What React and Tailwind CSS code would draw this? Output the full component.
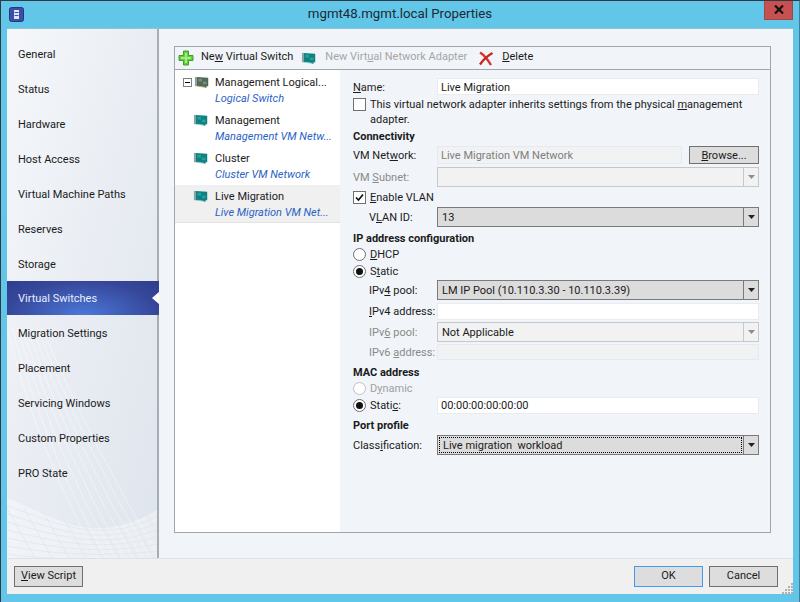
import React from 'react';

const navItems = [
  'General', 'Status', 'Hardware', 'Host Access', 'Virtual Machine Paths', 'Reserves', 'Storage',
  'Virtual Switches', 'Migration Settings', 'Placement', 'Servicing Windows', 'Custom Properties', 'PRO State',
];

const AdapterIcon = ({ tone = 'teal' }) => (
  <svg width="16" height="13" viewBox="0 0 18 14" preserveAspectRatio="none" className="shrink-0">
    <path d="M1 1 L3 1 L3 11 L1 11 Z" fill="#8fa3a8" />
    <path d="M3 1 L16 2 L16 11 L14 11 L14 13 L12 12 L5 11 L3 11 Z" fill={tone === 'teal' ? '#12807f' : '#4d6b58'} />
    <path d="M5 3 L9 3 L9 6 L5 6 Z M10 6 L14 6 L14 9 L10 9 Z" fill={tone === 'teal' ? '#1fa3a0' : '#7d8f78'} />
    <path d="M5 11 L12 12" stroke={tone === 'teal' ? '#7fd0cf' : '#c9a94a'} strokeWidth="1" />
  </svg>
);

const Mesh = () => (
  <svg className="absolute inset-0 w-full h-full pointer-events-none" viewBox="0 0 150 530" preserveAspectRatio="none">
    {[0, 1, 2, 3, 4, 5, 6, 7].map(i => (
      <path key={i} d={`M${i * 5} 300 Q ${30 + i * 8} 420 ${90 + i * 9} 530`} stroke="#ffffff" strokeOpacity="0.55" fill="none" strokeWidth="0.7" />
    ))}
    <path d="M0 470 C 50 490 85 520 150 482 L150 530 L0 530 Z" fill="#ffffff" fillOpacity="0.35" />
    {[0, 1, 2, 3, 4, 5, 6].map(i => (
      <path key={i} d={`M0 ${478 + i * 8} C 40 ${490 + i * 7} 90 ${520 + i * 2} 150 ${488 + i * 7}`} stroke="#dfe6ee" strokeOpacity="0.9" fill="none" strokeWidth="0.8" />
    ))}
    {[0, 1, 2, 3, 4, 5, 6, 7, 8, 9].map(i => (
      <path key={i} d={`M${i * 17} 480 L${i * 17 + 28} 530`} stroke="#dfe6ee" strokeOpacity="0.9" fill="none" strokeWidth="0.8" />
    ))}
  </svg>
);

const U = ({ children }) => <span className="underline underline-offset-1">{children}</span>;

const Label = ({ children, indent, disabled, className = '' }) => (
  <div className={`shrink-0 ${indent ? 'w-[84px] pl-[16px]' : 'w-[84px]'} whitespace-nowrap ${disabled ? 'text-[#8a8a8a]' : ''} ${className}`}>
    {children}
  </div>
);

const Combo = ({ children, disabled, focused }) => (
  <div className={`w-[322px] h-full flex border ${disabled ? 'border-[#c4c9cc] bg-[#f2f2f2]' : 'border-[#7a7a7a] bg-[#dcdcdc]'}`}>
    <div className="flex-1 min-w-0 p-px">
      <div className={`h-full flex items-center pl-[3px] ${focused ? 'border border-dotted border-black pl-[2px]' : ''}`}>{children}</div>
    </div>
    <div className={`w-[15px] flex items-center justify-center border-l ${disabled ? 'border-[#c4c9cc]' : 'border-[#7a7a7a]'}`}>
      <svg width="7" height="4" viewBox="0 0 7 4"><path d="M0 0 H7 L3.5 4 Z" fill={disabled ? '#8d8d8d' : '#222'} /></svg>
    </div>
  </div>
);

const TextBox = ({ children, disabled, width = 'w-[322px]', className = '' }) => (
  <div className={`${width} h-full flex items-center pl-[3px] border ${disabled ? 'bg-[#f1f2f3] border-[#e6e9f0] text-[#7d7d7d]' : 'bg-white border-[#e8ebf0]'} ${className}`}>
    {children}
  </div>
);

const Check = ({ checked }) => (
  <div className="w-[13px] h-[13px] border border-[#707070] bg-white flex items-center justify-center shrink-0">
    {checked && (
      <svg width="9" height="9" viewBox="0 0 9 9"><path d="M1 4.5 L3.5 7 L8 1.5" stroke="#111" strokeWidth="1.7" fill="none" /></svg>
    )}
  </div>
);

const Radio = ({ checked, disabled }) => (
  <div className={`w-[13px] h-[13px] rounded-full border bg-white flex items-center justify-center shrink-0 ${disabled ? 'border-[#c0c0c0]' : 'border-[#707070]'}`}>
    {checked && <div className="w-[7px] h-[7px] rounded-full bg-[#111]" />}
  </div>
);

const Heading = ({ children, className = '' }) => (
  <div className={`h-4 flex items-center font-bold ${className}`}>{children}</div>
);

const Button = ({ children, className = '' }) => (
  <button className={`h-[21px] border border-[#707070] bg-[#dddddd] flex items-center justify-center ${className}`}>{children}</button>
);

const TreeItem = ({ title, sub, selected, tone, expander }) => (
  <div className={`relative h-[38px] pl-[40px] pt-[4px] whitespace-nowrap leading-4 ${selected ? 'bg-[#f0f0f0] border-b border-[#e2e2e2]' : ''}`}>
    <div className={`absolute top-[5px] ${expander ? 'left-[16px]' : 'left-[18px]'} flex items-center`}>
      {expander && (
        <div className="absolute -left-[8px] top-[2px] w-[9px] h-[9px] border border-[#808080] bg-white flex items-center justify-center">
          <div className="w-[5px] h-px bg-black" />
        </div>
      )}
      <div className={expander ? 'ml-[3px]' : ''}><AdapterIcon tone={tone} /></div>
    </div>
    <div>{title}</div>
    <div className="italic text-[#2a62c4]">{sub}</div>
  </div>
);

export default function App() {
  return (
    <div className="w-[800px] h-[602px] bg-[#62c6e9] border border-[#2f3a44] border-b-0 border-r-[#3f7f9c] flex flex-col text-[#1b1b1b] text-[11px] overflow-hidden" style={{ fontFamily: 'Roboto, "Open Sans", sans-serif' }}>
      {/* Title bar */}
      <div className="relative h-[27px] shrink-0 flex items-center justify-center text-[13.25px] text-[#1a2a33]">
        <svg width="15" height="15" viewBox="0 0 15 15" className="absolute left-[8px] top-[6px]">
          <rect x="0.5" y="0.5" width="14" height="14" rx="2" fill="#3c4fa6" stroke="#28387f" />
          <rect x="5" y="3" width="5" height="9" fill="#dfe6fb" />
          <path d="M5.5 5.5 H9.5 M5.5 8.5 H9.5" stroke="#3c4fa6" />
        </svg>
        <span className="-mt-[1px]">mgmt48.mgmt.local Properties</span>
        <div className="absolute right-[6px] -top-px w-[29px] h-[20px] bg-[#c75050] border border-[#9b4a44] border-t-0 flex items-center justify-center">
          <svg width="10" height="9" viewBox="0 0 10 9"><path d="M1 0.5 L9 8.5 M9 0.5 L1 8.5" stroke="#111" strokeWidth="2.2" /></svg>
        </div>
      </div>

      {/* Client area */}
      <div className="mx-[6px] h-[566px] flex flex-col border-t border-[#8ec3d6] bg-[#f1f5f9]">
        <div className="flex flex-1 min-h-0">
          {/* Nav */}
          <div className="relative w-[152px] shrink-0 border-r-2 border-[#a9adb1] bg-gradient-to-br from-[#f5f7fa] via-[#e9edf3] to-[#dfe5ed]">
            <Mesh />
            <div className="relative pt-[7px]">
              {navItems.map(item => (
                item === 'Virtual Switches' ? (
                  <div key={item} className="relative h-[34px] pt-[2px] -mr-[2px] flex items-center pl-[11px] text-[#e8eefc] bg-[radial-gradient(ellipse_at_50%_100%,#4a78d8_0%,#36479a_70%,#2f3d8c_100%)]">
                    <span>{item}</span>
                    <div className="absolute right-0 top-[11px] w-0 h-0 border-y-[6px] border-y-transparent border-r-[7px] border-r-white" />
                  </div>
                ) : (
                  <div key={item} className="h-[35px] pt-[3px] flex items-center pl-[11px]">{item}</div>
                )
              ))}
            </div>
          </div>

          {/* Right pane */}
          <div className="flex-1 min-w-0 pl-[15px] pr-[22px] pt-[17px] pb-[25px]">
            <div className="h-full border border-[#a3a6a8] flex flex-col">
              {/* Toolbar */}
              <div className="h-[23px] shrink-0 border-b border-[#a3a6a8] flex items-center pl-[3px] pb-px">
                <svg width="16" height="16" viewBox="0 0 16 16" className="shrink-0 mt-px">
                  <path d="M5.5 1 H10.5 V5.5 H15 V10.5 H10.5 V15 H5.5 V10.5 H1 V5.5 H5.5 Z" fill="#5fcf3e" stroke="#3f9e2c" strokeWidth="1" />
                  <path d="M7 3 H9 V7 H13 V9 H9 V13 H7 V9 H3 V7 H7 Z" fill="#a5ec7f" />
                </svg>
                <span className="ml-[7px]">Ne<U>w</U> Virtual Switch</span>
                <div className="ml-[8px] mt-px"><AdapterIcon /></div>
                <span className="ml-[8px] text-[#a6a6a6]">New Virt<U>u</U>al Network Adapter</span>
                <svg width="16" height="15" viewBox="0 0 16 15" className="ml-[11px] shrink-0 mt-px">
                  <path d="M2 1.5 C6 4 10 9 13 14" stroke="#d8322a" strokeWidth="2.4" fill="none" />
                  <path d="M14.5 2 C10 4.5 5 9 2 13.5" stroke="#c8281f" strokeWidth="2.4" fill="none" />
                </svg>
                <span className="ml-[8px]"><U>D</U>elete</span>
              </div>

              <div className="flex-1 min-h-0 flex">
                {/* Tree */}
                <div className="w-[165px] shrink-0 bg-white pt-px">
                  <TreeItem title="Management Logical..." sub="Logical Switch" tone="green" expander />
                  <TreeItem title="Management" sub="Management VM Netw..." />
                  <TreeItem title="Cluster" sub="Cluster VM Network" />
                  <TreeItem title="Live Migration" sub="Live Migration VM Net..." selected />
                </div>

                {/* Form */}
                <div className="flex-1 min-w-0 pl-[13px] pt-[8px] leading-[15px]">
                  <div className="h-[17px] flex items-center">
                    <Label className="pt-px"><U>N</U>ame:</Label>
                    <TextBox className="pt-px">Live Migration</TextBox>
                  </div>
                  <div className="relative mt-[2px] h-[30px] pl-[17px] whitespace-nowrap">
                    <div className="absolute left-0 top-[1px]"><Check /></div>
                    <div>This virtual network adapter inherits settings from the physical <U>m</U>anagement</div>
                    <div>adapter.</div>
                  </div>
                  <Heading className="mt-px">Connectivity</Heading>
                  <div className="mt-[2px] h-[18px] flex items-center">
                    <Label>VM Net<U>w</U>ork:</Label>
                    <TextBox disabled width="w-[245px]">Live Migration VM Network</TextBox>
                    <Button className="ml-[7px] w-[70px] !h-[18px]"><span><U>B</U>rowse...</span></Button>
                  </div>
                  <div className="mt-[3px] h-[20px] flex items-center">
                    <Label disabled>VM <U>S</U>ubnet:</Label>
                    <Combo disabled />
                  </div>
                  <div className="mt-[2px] h-4 flex items-center gap-[4px]">
                    <Check checked />
                    <span><U>E</U>nable VLAN</span>
                  </div>
                  <div className="mt-[2px] h-[20px] flex items-center">
                    <Label indent>V<U>L</U>AN ID:</Label>
                    <Combo>13</Combo>
                  </div>
                  <Heading className="mt-[3px]">IP address configuration</Heading>
                  <div className="h-4 flex items-center gap-[4px]">
                    <Radio />
                    <span><U>D</U>HCP</span>
                  </div>
                  <div className="mt-px h-4 flex items-center gap-[4px]">
                    <Radio checked />
                    <span>S<U>t</U>atic</span>
                  </div>
                  <div className="mt-px h-[20px] flex items-center">
                    <Label indent>IPv<U>4</U> pool:</Label>
                    <Combo>LM IP Pool (10.110.3.30 - 10.110.3.39)</Combo>
                  </div>
                  <div className="mt-[3px] h-[17px] flex items-center">
                    <Label indent><U>I</U>Pv4 address:</Label>
                    <TextBox />
                  </div>
                  <div className="mt-[2px] h-[20px] flex items-center">
                    <Label indent disabled>IPv<U>6</U> pool:</Label>
                    <Combo disabled>Not Applicable</Combo>
                  </div>
                  <div className="mt-[2px] h-4 flex items-center">
                    <Label indent disabled>IPv6 <U>a</U>ddress:</Label>
                    <TextBox disabled />
                  </div>
                  <Heading className="mt-[4px]">MAC address</Heading>
                  <div className="h-4 flex items-center gap-[4px] text-[#a0a0a0]">
                    <Radio disabled />
                    <span>D<U>y</U>namic</span>
                  </div>
                  <div className="mt-px h-[17px] flex items-center">
                    <div className="w-[84px] shrink-0 flex items-center gap-[4px]">
                      <Radio checked />
                      <span>Stati<U>c</U>:</span>
                    </div>
                    <TextBox>00:00:00:00:00:00</TextBox>
                  </div>
                  <Heading className="mt-[3px]">Port profile</Heading>
                  <div className="mt-[2px] h-[20px] flex items-center">
                    <Label>Class<U>i</U>fication:</Label>
                    <Combo focused><span className="whitespace-pre">Live migration  workload</span></Combo>
                  </div>
                </div>
              </div>
            </div>
          </div>
        </div>

        {/* Footer */}
        <div className="relative h-[36px] shrink-0 border-t border-[#e0e3e6] bg-[#f0f0f0] flex items-center justify-between pl-[7px] pr-[15px]">
          <Button className="w-[69px]"><span><U>V</U>iew Script</span></Button>
          <div className="flex gap-[6px]">
            <Button className="w-[69px] !border-[#3f9cf0]">OK</Button>
            <Button className="w-[69px]">Cancel</Button>
          </div>
          <svg width="11" height="11" viewBox="0 0 11 11" className="absolute right-0 bottom-0">
            {[[9, 1], [9, 4], [6, 4], [9, 7], [6, 7], [3, 7], [9, 10], [6, 10], [3, 10], [0, 10]].map(([x, y]) => (
              <rect key={`${x}-${y}`} x={x} y={y - 1} width="2" height="2" fill="#b0b0b0" />
            ))}
          </svg>
        </div>
      </div>
    </div>
  );
}
